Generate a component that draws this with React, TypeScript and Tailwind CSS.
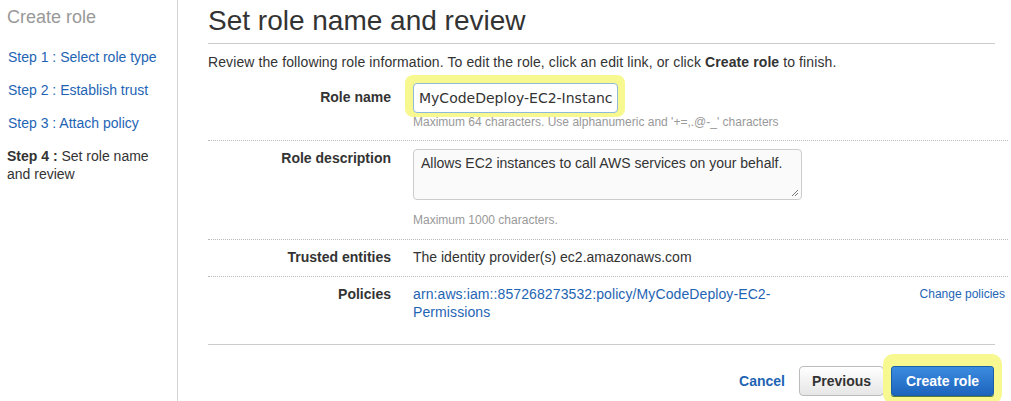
export default function App() {
  return (
    <div
      className="flex h-[401px] w-[1011px] overflow-hidden bg-white text-[#333]"
      style={{ fontFamily: '"Liberation Sans", Arial, sans-serif' }}
    >
      <div className="w-[178px] shrink-0 border-r border-[#d5d5d5] pl-[7px] pt-[6px]">
        <div className="text-[18px] leading-[22px] text-[#999]">Create role</div>
        <div className="mt-[20px] flex flex-col text-[14px] leading-[18px]">
          <a className="ml-[1px] text-[#1e64b4]">Step 1 : Select role type</a>
          <a className="ml-[1px] mt-[15px] text-[#1e64b4]">Step 2 : Establish trust</a>
          <a className="ml-[1px] mt-[15px] text-[#1e64b4]">Step 3 : Attach policy</a>
          <div className="mt-[15px] w-[160px] text-[#333]">
            <b>Step 4 :</b> Set role name and review
          </div>
        </div>
      </div>

      <div className="flex-1 pl-[30px]">
        <div className="mr-[16px] border-b border-[#ccc] pb-[5px] pt-[4px] text-[28px] leading-[34px] text-[#333]">
          Set role name and review
        </div>
        <div className="mt-[10px] text-[14px] leading-[16px] tracking-[0.1px]">
          Review the following role information. To edit the role, click an edit link, or click <b>Create role</b> to
          finish.
        </div>

        <div className="mr-[3px] mt-[5px]">
          <div className="flex border-b border-dotted border-[#bbb] pb-[11px]">
            <div className="w-[183px] pt-[14px] text-right text-[14px] font-bold leading-[16px]">Role name</div>
            <div className="ml-[22px]">
              <div className="-ml-[8px] w-fit rounded-[8px] bg-[#f8f891] pb-[4px] pl-[8px] pr-[7px] pt-[8px]">
                <div
                  className="flex h-[30px] w-[205px] items-center overflow-hidden rounded-[4px] border border-[#8fb9d8] bg-white px-[5px] text-[14px] text-[#333]"
                  style={{ fontFamily: '"DejaVu Sans", sans-serif' }}
                >
                  <span className="whitespace-nowrap">MyCodeDeploy-EC2-Instanc</span>
                </div>
              </div>
              <div className="-mt-[2px] text-[12px] leading-[14px] text-[#999]">
                Maximum 64 characters. Use alphanumeric and '+=,.@-_' characters
              </div>
            </div>
          </div>

          <div className="flex border-b border-dotted border-[#bbb] pb-[12px] pt-[8px]">
            <div className="w-[183px] pt-[1px] text-right text-[14px] font-bold leading-[16px]">Role description</div>
            <div className="ml-[22px]">
              <div className="relative h-[51px] w-[389px] rounded-[4px] border border-[#ccc] bg-[#fafafa] px-[7px] pt-[5px] text-[14px] leading-[16px]">
                Allows EC2 instances to call AWS services on your behalf.
                <svg className="absolute bottom-[2px] right-[2px]" width="8" height="8" viewBox="0 0 8 8">
                  <path d="M7 1 L1 7 M7 4 L4 7" stroke="#777" strokeWidth="1" />
                </svg>
              </div>
              <div className="mt-[13px] text-[12px] leading-[14px] text-[#999]">Maximum 1000 characters.</div>
            </div>
          </div>

          <div className="flex border-b border-dotted border-[#bbb] pb-[11px] pt-[9px] text-[14px] leading-[16px]">
            <div className="w-[183px] text-right font-bold">Trusted entities</div>
            <div className="ml-[22px]">The identity provider(s) ec2.amazonaws.com</div>
          </div>

          <div className="flex pt-[8px] text-[14px] leading-[18px]">
            <div className="w-[183px] text-right font-bold">Policies</div>
            <div className="ml-[22px] w-[380px] tracking-[0.1px] text-[#1e64b4]">
              arn:aws:iam::857268273532:policy/MyCodeDeploy-EC2-Permissions
            </div>
            <div className="ml-auto mr-[3px] text-[12px] text-[#1e64b4]">Change policies</div>
          </div>
        </div>

        <div className="mr-[16px] mt-[23px] border-b border-[#ccc]" />

        <div className="mr-[9px] mt-[9px] flex items-start justify-end">
          <a className="mr-[14px] mt-[19px] text-[14px] font-bold leading-[16px] text-[#1e64b4]">Cancel</a>
          <button className="mt-[12px] h-[30px] w-[85px] rounded-[4px] border border-[#bbb] bg-gradient-to-b from-[#fff] to-[#e6e6e6] text-[14px] font-bold text-[#333]">
            Previous
          </button>
          <div className="ml-[-1px] rounded-[10px] bg-[#f8f891] px-[8px] pb-[8px] pt-[12px]">
            <button className="h-[30px] w-[103px] rounded-[3px] border border-[#1a5ea8] bg-gradient-to-b from-[#3b8ce0] to-[#1d64bd] text-[14px] font-bold text-white shadow-[0_1px_0_#5a7a3a]">
              Create role
            </button>
          </div>
        </div>
      </div>
    </div>
  );
}
